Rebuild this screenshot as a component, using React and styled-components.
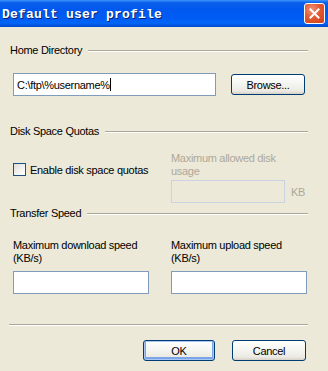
import styled, { createGlobalStyle } from 'styled-components';

const Global = createGlobalStyle`
    html, body {
        margin: 0;
        padding: 0;
        background: #ece9d8;
    }
`;

const App = () => {
    return (
        <Window>
            <Global />
            <TitleBar>
                <Title>Default user profile</Title>
                <CloseButton>
                    <svg width="11" height="11" viewBox="0 0 11 11">
                        <path
                            d="M1.5 1.5 L9.5 9.5 M9.5 1.5 L1.5 9.5"
                            stroke="#fff"
                            strokeWidth="2"
                            strokeLinecap="square"
                        />
                    </svg>
                </CloseButton>
            </TitleBar>
            <Body>
                {/* home directory */}
                <GroupHeader $top={16}>
                    <span>Home Directory</span>
                    <Rule />
                </GroupHeader>
                <Row $top={16}>
                    <TextBox $width={203}>
                        C:\ftp\%username%<Caret />
                    </TextBox>
                    <Spacer />
                    <Button>Browse...</Button>
                </Row>

                {/* quotas */}
                <GroupHeader $top={28}>
                    <span>Disk Space Quotas</span>
                    <Rule />
                </GroupHeader>
                <QuotaRow>
                    <CheckLabel>
                        <CheckBox />
                        Enable disk space quotas
                    </CheckLabel>
                    <QuotaColumn>
                        <Label $disabled>
                            Maximum allowed disk
                            <br />
                            usage
                        </Label>
                        <UnitRow>
                            <TextBox $width={114} $disabled />
                            <Unit>KB</Unit>
                        </UnitRow>
                    </QuotaColumn>
                </QuotaRow>

                {/* transfer speed */}
                <GroupHeader $top={3}>
                    <span>Transfer Speed</span>
                    <Rule />
                </GroupHeader>
                <SpeedGrid>
                    <Field>
                        <Label>
                            Maximum download speed
                            <br />
                            (KB/s)
                        </Label>
                        <TextBox $width={136} />
                    </Field>
                    <Field>
                        <Label>
                            Maximum upload speed
                            <br />
                            (KB/s)
                        </Label>
                        <TextBox $width={136} />
                    </Field>
                </SpeedGrid>

                <Separator />
                <Footer>
                    <Button $default>OK</Button>
                    <Button>Cancel</Button>
                </Footer>
            </Body>
        </Window>
    );
};

const Window = styled.div`
    width: 328px;
    height: 371px;
    overflow: hidden;
    background: #ece9d8;
    font-family: 'Liberation Sans', Arial, sans-serif;
    font-size: 11px;
    letter-spacing: -0.3px;
    color: #000;
`;

const TitleBar = styled.div`
    height: 27px;
    box-sizing: border-box;
    display: flex;
    align-items: center;
    justify-content: space-between;
    padding: 0 2px 0 2px;
    background: linear-gradient(
        to bottom,
        #3d95ff 0%,
        #0a5fe8 10%,
        #0058ee 35%,
        #005cf5 70%,
        #0266f7 85%,
        #0048cc 100%
    );
`;

const Title = styled.span`
    font-family: 'Liberation Mono', 'Courier New', monospace;
    font-weight: bold;
    font-size: 13px;
    letter-spacing: 0.2px;
    color: #fff;
    text-shadow: 1px 1px 0 #0a1e6e;
    margin-top: 1px;
`;

const CloseButton = styled.span`
    width: 21px;
    height: 21px;
    box-sizing: border-box;
    border: 1px solid #fff;
    border-radius: 3px;
    background: radial-gradient(
        circle at 35% 30%,
        #f0927a 0%,
        #e35a32 45%,
        #cc3f18 100%
    );
    display: flex;
    align-items: center;
    justify-content: center;
    margin-right: 1px;
`;

const Body = styled.div`
    padding: 0 20px 0 10px;
    display: flex;
    flex-direction: column;
`;

const GroupHeader = styled.div`
    display: flex;
    align-items: center;
    gap: 6px;
    height: 14px;
    line-height: 14px;
    margin-top: ${(p) => p.$top}px;
    white-space: nowrap;
`;

const Rule = styled.div`
    flex: 1;
    height: 0;
    border-top: 1px solid #aca899;
    border-bottom: 1px solid #fff;
    margin-top: 2px;
`;

const Row = styled.div`
    display: flex;
    align-items: center;
    padding: 0 3px;
    margin-top: ${(p) => p.$top}px;
`;

const Spacer = styled.div`
    flex: 1;
`;

const TextBox = styled.div`
    width: ${(p) => p.$width}px;
    height: 23px;
    box-sizing: border-box;
    border: 1px solid ${(p) => (p.$disabled ? '#c9d3e2' : '#7f9db9')};
    background: ${(p) => (p.$disabled ? '#ece9d8' : '#fff')};
    padding-left: 3px;
    display: flex;
    align-items: center;
    white-space: nowrap;
`;

const Caret = styled.span`
    display: inline-block;
    width: 1px;
    height: 13px;
    background: #000;
`;

const Button = styled.button`
    width: ${(p) => (p.$default ? 72 : 74)}px;
    height: 21px;
    box-sizing: border-box;
    border: 1px solid #003c74;
    border-radius: 3px;
    font-family: inherit;
    font-size: 11px;
    letter-spacing: inherit;
    color: #000;
    padding: 0;
    background: linear-gradient(to bottom, #ffffff 0%, #f4f4f0 50%, #ebeae3 85%, #d6d0c5 100%);
    box-shadow: ${(p) =>
        p.$default
            ? 'inset 0 0 0 1px #a9c6f5, inset 0 -1px 0 2px #7ea4e8'
            : 'none'};
`;

const QuotaRow = styled.div`
    display: flex;
    padding-left: 3px;
    margin-top: 14px;
`;

const CheckLabel = styled.div`
    width: 158px;
    display: flex;
    align-items: center;
    gap: 4px;
    margin-top: 11px;
    height: 13px;
    white-space: nowrap;
`;

const CheckBox = styled.span`
    width: 13px;
    height: 13px;
    box-sizing: border-box;
    border: 1px solid #1c5180;
    background: linear-gradient(135deg, #dcdcd7 0%, #f4f4f1 60%, #fff 100%);
`;

const QuotaColumn = styled.div`
    display: flex;
    flex-direction: column;
    gap: 2px;
`;

const Label = styled.div`
    line-height: 13px;
    white-space: nowrap;
    color: ${(p) => (p.$disabled ? '#aca899' : '#000')};
`;

const UnitRow = styled.div`
    display: flex;
    align-items: center;
    gap: 6px;
`;

const Unit = styled.span`
    color: #aca899;
`;

const SpeedGrid = styled.div`
    display: grid;
    grid-template-columns: 136px 136px;
    column-gap: 22px;
    padding-left: 3px;
    margin-top: 19px;
`;

const Field = styled.div`
    display: flex;
    flex-direction: column;
    gap: 6px;
`;

const Separator = styled.div`
    height: 0;
    border-top: 1px solid #aca899;
    border-bottom: 1px solid #fff;
    margin: 30px 0 0 -1px;
`;

const Footer = styled.div`
    display: flex;
    justify-content: flex-end;
    gap: 17px;
    margin-top: 14px;
    padding-right: 2px;
`;

export default App;
